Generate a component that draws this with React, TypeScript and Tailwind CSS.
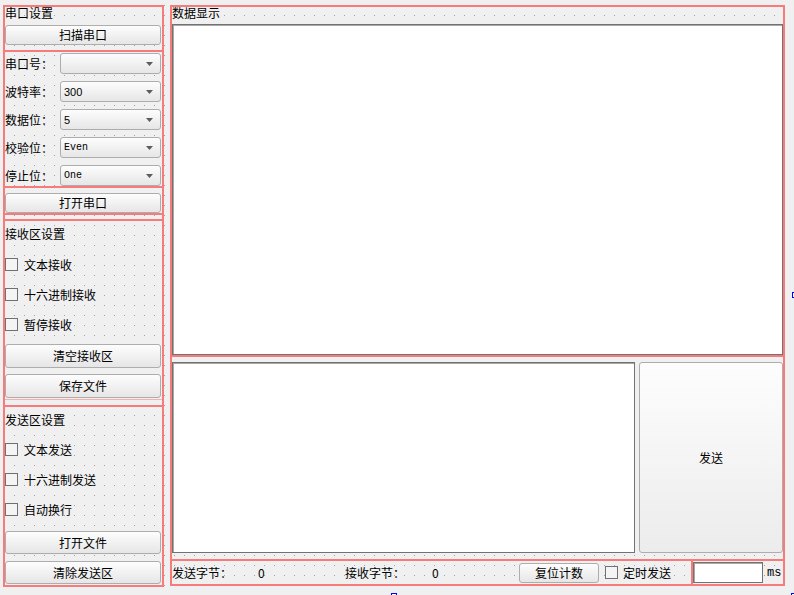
import React from "react";

function Btn({ label, className }: { label: string; className: string }) {
  return (
    <div
      className={
        "flex items-center justify-center rounded-[3px] border border-[#adadad] bg-linear-to-b from-[#fdfdfd] to-[#e6e6e6] text-[12px] leading-[12px] text-black " +
        className
      }
    >
      {label}
    </div>
  );
}

function Combo({ value, mono }: { value: string; mono?: boolean }) {
  return (
    <div className="flex h-[21px] w-[101px] items-center rounded-[3px] border border-[#adadad] bg-linear-to-b from-[#fdfdfd] to-[#e6e6e6] pl-[3px]">
      <span
        className={
          mono
            ? "font-['Liberation_Mono',monospace] text-[10px] leading-[12px]"
            : "font-['Liberation_Sans',sans-serif] text-[11px] leading-[12px]"
        }
      >
        {value}
      </span>
      <svg className="ml-auto mr-[7px]" width="7" height="4" viewBox="0 0 7 4">
        <path d="M0 0H7L3.5 4Z" fill="#5c5c5c" />
      </svg>
    </div>
  );
}

function FormRow({ label, value, mono }: { label: string; value: string; mono?: boolean }) {
  return (
    <div className="flex h-[21px] items-center">
      <span className="w-[55px] text-[12px] leading-[12px]">{label}</span>
      <Combo value={value} mono={mono} />
    </div>
  );
}

function Check({ label, className }: { label: string; className: string }) {
  return (
    <div className={"flex h-[13px] items-center " + className}>
      <div className="h-[13px] w-[13px] shrink-0 border border-[#707070] bg-[#f4f4f4]" />
      <span className="ml-[6px] whitespace-nowrap text-[12px] leading-[12px]">{label}</span>
    </div>
  );
}

export default function App() {
  return (
    <div className="relative h-[595px] w-[794px] overflow-hidden bg-[#f0f0f0] font-['Noto_Sans_CJK_SC',sans-serif] text-black">
      <div className="flex h-[591px] w-[789px] pl-[3px] pt-[5px] [background-image:linear-gradient(#f0f0f0_9px,transparent_9px),linear-gradient(90deg,#a0a0a0_1px,#f0f0f0_1px)] [background-size:10px_10px] [background-position:4px_6px]">
        {/* Left column */}
        <div className="flex h-[582px] w-[161px] flex-col border-2 border-[#f77b7b]">
          {/* 串口设置 */}
          <div className="flex h-[45px] flex-col border-b-2 border-[#f77b7b]">
            <div className="h-[12px] text-[12px] leading-[12px]">串口设置</div>
            <Btn label="扫描串口" className="mr-[1px] mt-[6px] h-[20px]" />
          </div>
          <div className="flex h-[136px] flex-col gap-[7px] border-b-2 border-[#f77b7b] pt-[1px]">
            <FormRow label="串口号：" value="" />
            <FormRow label="波特率：" value="300" />
            <FormRow label="数据位：" value="5" />
            <FormRow label="校验位：" value="Even" mono />
            <FormRow label="停止位：" value="One" mono />
          </div>
          <div className="flex h-[27px] flex-col border-b-2 border-[#f77b7b] pt-[5px]">
            <Btn label="打开串口" className="mr-[1px] h-[20px]" />
          </div>
          {/* 接收区设置 */}
          <div className="mt-[4px] flex h-[188px] flex-col border-y-2 border-[#f77b7b]">
            <div className="mt-[7px] h-[12px] text-[12px] leading-[12px]">接收区设置</div>
            <Check label="文本接收" className="mt-[18px]" />
            <Check label="十六进制接收" className="mt-[17px]" />
            <Check label="暂停接收" className="mt-[17px]" />
            <Btn label="清空接收区" className="mr-[1px] mt-[13px] h-[24px]" />
            <Btn label="保存文件" className="mr-[1px] mt-[6px] h-[24px]" />
            <div className="mt-[1px] flex-1 border-t border-[#f6b0b0]" />
          </div>
          {/* 发送区设置 */}
          <div className="flex flex-1 flex-col">
            <div className="mt-[7px] h-[12px] text-[12px] leading-[12px]">发送区设置</div>
            <Check label="文本发送" className="mt-[17px]" />
            <Check label="十六进制发送" className="mt-[17px]" />
            <Check label="自动换行" className="mt-[17px]" />
            <Btn label="打开文件" className="mr-[1px] mt-[15px] h-[23px]" />
            <Btn label="清除发送区" className="mr-[1px] mt-[7px] h-[23px]" />
          </div>
        </div>

        {/* Right panel */}
        <div className="ml-[6px] flex h-[581px] w-[615px] flex-col border-2 border-[#f77b7b]">
          <div className="h-[12px] text-[12px] leading-[12px]">数据显示</div>
          <div className="mt-[5px] h-[331px] border border-[#727272] bg-white shadow-[inset_1px_1px_0_#a8a8a8]" />
          <div className="h-[2px] bg-[#f77b7b]" />
          <div className="mt-[5px] flex h-[191px] gap-[4px]">
            <div className="w-[463px] border border-[#727272] bg-white shadow-[inset_1px_1px_0_#a8a8a8]" />
            <div className="flex flex-1 items-center justify-center rounded-[3px] border border-[#adadad] bg-linear-to-b from-[#fdfdfd] to-[#ececec] text-[12px] leading-[12px]">
              发送
            </div>
          </div>
          <div className="flex-1" />
          <div className="flex h-[25px] items-center border-t-2 border-[#f77b7b] text-[12px] leading-[12px]">
            <span className="w-[86px] whitespace-nowrap">发送字节：</span>
            <span className="w-[87px]">0</span>
            <span className="w-[87px] whitespace-nowrap">接收字节：</span>
            <span className="w-[87px]">0</span>
            <Btn label="复位计数" className="h-[20px] w-[80px]" />
            <div className="ml-[6px] h-[13px] w-[13px] border border-[#707070] bg-[#f4f4f4]" />
            <span className="ml-[5px] w-[68px] whitespace-nowrap">定时发送</span>
            <div className="flex h-full items-center border-l-2 border-[#f77b7b]">
              <div className="h-[21px] w-[70px] border border-[#727272] bg-white shadow-[inset_1px_1px_0_#a8a8a8]" />
              <span className="ml-[4px] font-['Liberation_Mono',monospace] text-[12px] leading-[12px]">ms</span>
            </div>
          </div>
        </div>
      </div>

      {/* Designer resize handles */}
      <div className="absolute left-[792px] top-[292px] h-[6px] w-[6px] border border-[#0000ff] bg-white" />
      <div className="absolute left-[391px] top-[593px] h-[6px] w-[6px] border border-[#0000ff] bg-white" />
      <div className="absolute left-[791px] top-[593px] h-[6px] w-[6px] border border-[#0000ff] bg-white" />
    </div>
  );
}
